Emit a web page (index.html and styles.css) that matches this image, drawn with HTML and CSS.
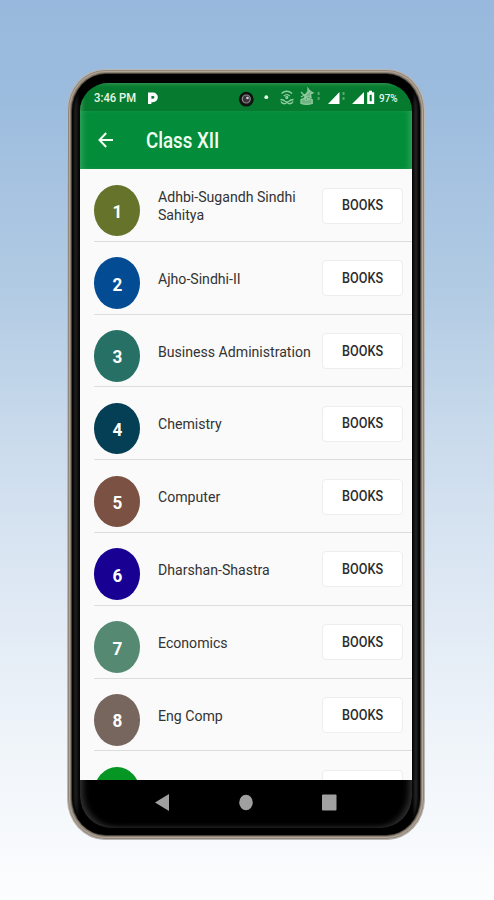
FILE: index.html
```html
<!DOCTYPE html>
<html lang="en">
<head>
    <meta charset="UTF-8">
    <meta name="viewport" content="width=device-width, initial-scale=1.0">
    <title>Class XII</title>
    <link rel="stylesheet" href="styles.css">
</head>
<body>
    <div class="phone">
        <div class="bezel">
            <div class="screen">
                <div class="statusbar">
                    <span class="time">3:46 PM</span>
                    <svg class="status-icons" width="278" height="28" viewBox="134 83 278 28">
                        <path d="M149.700 104V94.200h3.300a2.500 2.500 0 0 1 0 6.300h-3.300" fill="none" stroke="#fff" stroke-width="3.400"/>
                        <circle cx="246.300" cy="99.200" r="7.400" fill="#101312"/>
                        <circle cx="246.300" cy="99" r="4" fill="#38363a" stroke="#8d8a8c" stroke-width="1.200"/>
                        <circle cx="247.500" cy="98" r="1.300" fill="#d4d1d2"/>
                        <circle cx="266.300" cy="97.200" r="1.900" fill="#e8fbe9"/>
                        <g fill="none" stroke="#8fcea1" stroke-width="1.300">
                            <path d="M281.500 93.500q5.300-4.600 10.600 0M283.700 96q3.100-2.700 6.200 0"/>
                            <circle cx="286.800" cy="97.500" r="1"/>
                            <path d="M280.500 99.500q3 .2 4.500 1.800 2 1.400 4 0 1.500-1.600 4.500-1.800M281 101.500q1 2.500 4 2.200l2-1.200 2 1.200q3 .3 4-2.200"/>
                        </g>
                        <g stroke="#91c99e" stroke-width="1.300" fill="#6fb482">
                            <path d="M301 103.500v-3.800l3-1.200 2.500 2 2.500-2 3.200 1.200v3.800q-5.600 1.700-11.200 0z"/>
                            <path d="M304.500 97.500l3.500-6.500v-2.500l1.700 2.500 3.300 2-2.500 1 .5 3.500-3.500-1-2 2z"/>
                            <path d="M301 92l8 8M301 97l10-6" fill="none"/>
                        </g>
                        <path d="M318.600 92v3m0 2v3M343.500 92v3m0 2v3" stroke="#58a96e" stroke-width="2"/>
                        <path d="M328 104l11.500-12v12zM352 104l12-12v12z" fill="#fff"/>
                        <path d="M367.200 92.300h1.800v-1.500h3v1.500h2.200v11.700h-7z" fill="#fff"/>
                        <path d="M370.700 94.800v6.500" stroke="#087a32" stroke-width="2"/>
                    </svg>
                    <span class="battery">97%</span>
                </div>
                <div class="toolbar">
                    <svg class="back" width="16" height="16" viewBox="0 0 16 16">
                        <path d="M15 8H1.800M8.200 1L1.500 8l6.700 7" fill="none" stroke="#f2fff3" stroke-width="2"/>
                    </svg>
                    <h1>Class XII</h1>
                </div>
                <div class="list">
                    <div class="row">
                        <div class="num olive"><b>1</b></div>
                        <div class="subject"><span>Adhbi-Sugandh Sindhi<br>Sahitya</span></div>
                        <button><span>BOOKS</span></button>
                    </div>
                    <div class="row">
                        <div class="num blue"><b>2</b></div>
                        <div class="subject"><span>Ajho-Sindhi-II</span></div>
                        <button><span>BOOKS</span></button>
                    </div>
                    <div class="row">
                        <div class="num teal"><b>3</b></div>
                        <div class="subject"><span>Business Administration</span></div>
                        <button><span>BOOKS</span></button>
                    </div>
                    <div class="row">
                        <div class="num navy"><b>4</b></div>
                        <div class="subject"><span>Chemistry</span></div>
                        <button><span>BOOKS</span></button>
                    </div>
                    <div class="row">
                        <div class="num brown"><b>5</b></div>
                        <div class="subject"><span>Computer</span></div>
                        <button><span>BOOKS</span></button>
                    </div>
                    <div class="row">
                        <div class="num indigo"><b>6</b></div>
                        <div class="subject"><span>Dharshan-Shastra</span></div>
                        <button><span>BOOKS</span></button>
                    </div>
                    <div class="row">
                        <div class="num sage"><b>7</b></div>
                        <div class="subject"><span>Economics</span></div>
                        <button><span>BOOKS</span></button>
                    </div>
                    <div class="row">
                        <div class="num taupe"><b>8</b></div>
                        <div class="subject"><span>Eng Comp</span></div>
                        <button><span>BOOKS</span></button>
                    </div>
                    <div class="row">
                        <div class="num green"></div>
                        <div class="subject"></div>
                        <button></button>
                    </div>
                </div>
                <div class="navbar">
                    <svg width="332" height="48" viewBox="80 780 332 48">
                        <path d="M155 802.500l14-8.500v17z" fill="#a0a0a0"/>
                        <ellipse cx="246" cy="802.500" rx="6.800" ry="7.700" fill="#a0a0a0"/>
                        <rect x="322" y="794.500" width="14.500" height="16" rx="1" fill="#a0a0a0"/>
                    </svg>
                </div>
            </div>
        </div>
    </div>
</body>
</html>
```
FILE: styles.css
```css
* {
    box-sizing: border-box;
}
body {
    margin: 0;
    height: 900px;
    padding-top: 69px;
    overflow: hidden;
    font-family: Roboto, "Liberation Sans", sans-serif;
    background: linear-gradient(#98b9dd 0, #9cbcde 100px, #b3cce4 300px, #ccdced 450px, #dfe9f4 600px, #f0f5fa 750px, #fcfdfe 900px);
}
.phone {
    width: 358px;
    height: 771px;
    margin-left: 67px;
    padding: 4px;
    border: 1px solid #b9b8b5;
    border-radius: 38px / 41px;
    background: #8d8173;
    box-shadow: inset 0 0 0 1px #91877b, inset 0 0 0 2px #b1a598;
}
.bezel {
    height: 100%;
    padding: 9px 8px 6px;
    border-radius: 34px / 37px;
    background: linear-gradient(90deg, #171717 0, #242424 3px, #000 8px, #000 340px, #262626 344px, #111 348px);
    box-shadow: 0 0 0 1px #48423d, inset 0 0 3px 2px #000;
}
.screen {
    display: flex;
    flex-direction: column;
    height: 100%;
    border-radius: 28px 28px 32px 32px;
    overflow: hidden;
}
.statusbar {
    display: flex;
    align-items: center;
    height: 28px;
    background: #067b30;
    box-shadow: inset 4px 3px 5px -3px #53a66b;
    position: relative;
    color: #e7f8e8;
    font-weight: 500;
}
.time {
    width: 54px;
    padding-left: 14px;
    padding-top: 1px;
    font-size: 12px;
    white-space: nowrap;
    transform: scaleX(.94);
    transform-origin: 14px 50%;
}
.status-icons {
    flex: none;
}
.battery {
    position: absolute;
    right: 14px;
    top: 8px;
    font-size: 11.5px;
    line-height: 14px;
    transform: scaleX(.86);
    transform-origin: right;
}
.toolbar {
    display: flex;
    align-items: center;
    height: 58px;
    padding-left: 18px;
    background: #038d3b;
    box-shadow: inset 6px 0 6px -4px #39a561, inset -6px 0 6px -4px #39a561;
}
.toolbar h1 {
    margin: 1px 0 0 32px;
    font-size: 21.5px;
    font-weight: 500;
    color: #f0fff1;
    transform: scaleX(.87);
    transform-origin: left;
}
.list {
    height: 611px;
    overflow: hidden;
    background: #fafafa;
}
.row {
    display: flex;
    height: 72.8px;
    margin-left: 14px;
    border-bottom: 1px solid #dcdcdc;
}
.num {
    display: flex;
    align-items: center;
    justify-content: center;
    width: 46px;
    height: 51.5px;
    margin-top: 15.5px;
    padding-top: 2px;
    border-radius: 50%;
    color: #fff;
    font-size: 19px;
}
.num b {
    transform: scaleX(.9);
}
.subject {
    width: 164px;
    height: 36px;
    margin: 19px 0 0 18px;
    display: flex;
    align-items: center;
    white-space: nowrap;
    font-size: 15.5px;
    line-height: 18px;
    color: #333;
}
.subject span {
    transform: scaleX(.91);
    transform-origin: left;
}
.row button {
    width: 81px;
    height: 36px;
    margin-top: 18.5px;
    padding: 0;
    border: 1px solid #ededed;
    border-radius: 4px;
    background: #fff;
    font-family: inherit;
    font-size: 14.5px;
    font-weight: 500;
    color: #2c2c2c;
}
.row button span {
    display: inline-block;
    transform: scaleX(.87);
}
.olive { background: #65732b; }
.blue { background: #034c94; }
.teal { background: #267065; }
.navy { background: #043f55; }
.brown { background: #7a5142; }
.indigo { background: #170092; }
.sage { background: #558971; }
.taupe { background: #77665d; }
.green { background: #059624; }
.navbar {
    height: 48px;
    border-radius: 0 0 32px 32px;
    background: #000;
    box-shadow: inset 7px -3px 6px -4px #333, inset -7px -3px 6px -4px #303030;
}
```
